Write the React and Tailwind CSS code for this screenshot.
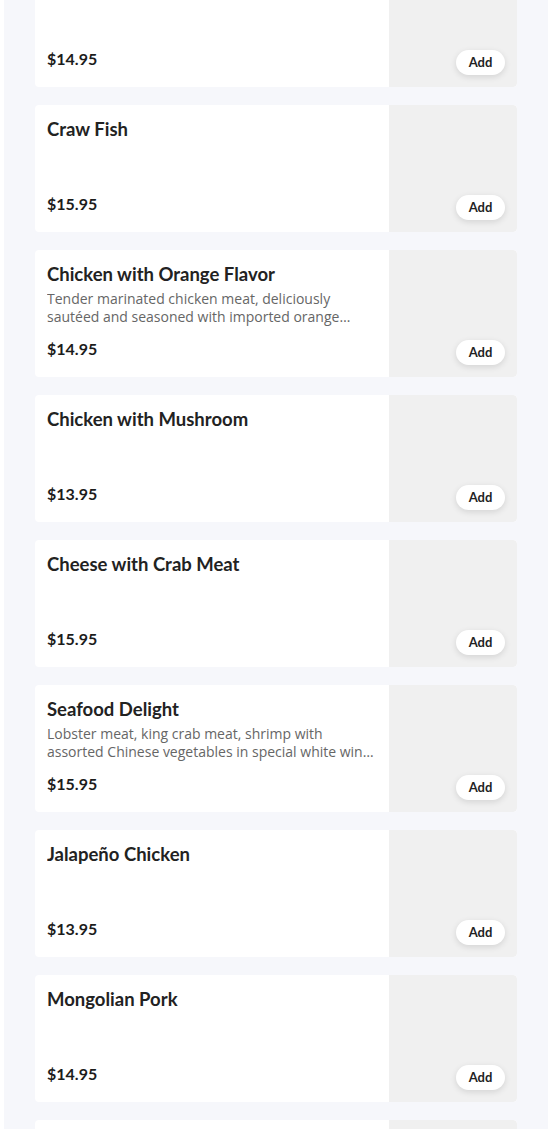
const items = [
  { name: "Sesame Chicken", price: "$14.95" },
  { name: "Craw Fish", price: "$15.95" },
  {
    name: "Chicken with Orange Flavor",
    description:
      "Tender marinated chicken meat, deliciously sautéed and seasoned with imported orange peels in a tangy sauce.",
    price: "$14.95",
  },
  { name: "Chicken with Mushroom", price: "$13.95" },
  { name: "Cheese with Crab Meat", price: "$15.95" },
  {
    name: "Seafood Delight",
    description:
      "Lobster meat, king crab meat, shrimp with assorted Chinese vegetables in special white wine sauce.",
    price: "$15.95",
  },
  { name: "Jalapeño Chicken", price: "$13.95" },
  { name: "Mongolian Pork", price: "$14.95" },
  { name: "Hunan Beef", price: "$14.95" },
];

function MenuCard({ item }) {
  return (
    <div className="flex h-[127px] shrink-0 overflow-hidden rounded-[4px] bg-white">
      <div className="flex min-w-0 flex-1 flex-col px-3 pt-3 pb-[17px]">
        <h3 className="truncate text-[18.5px] font-bold leading-6 text-[#222]">
          {item.name}
        </h3>
        {item.description && (
          <p className="mt-[4px] line-clamp-2 font-['Open_Sans',sans-serif] text-[14px] leading-[18px] text-[#666]">
            {item.description}
          </p>
        )}
        <div className="mt-auto text-[16px] font-bold leading-[22px] text-[#1c1c1c]">
          {item.price}
        </div>
      </div>
      <div className="relative w-[128px] shrink-0 rounded-r-[4px] bg-[#f0f0f0]">
        <button
          type="button"
          className="absolute right-3 bottom-[12px] h-[25px] w-[49px] rounded-full bg-white text-[13px] font-bold text-[#222] shadow-[0_2px_6px_rgba(0,0,0,0.12)]"
        >
          Add
        </button>
      </div>
    </div>
  );
}

export default function App() {
  return (
    <div
      className="h-[1129px] overflow-hidden bg-white"
      style={{ fontFamily: "Lato, 'Noto Sans', sans-serif" }}
    >
      <div className="ml-1 mr-0.5 h-full overflow-hidden bg-[#f6f7fb] px-[31px]">
        <div className="-mt-[40px] flex flex-col gap-[18px]">
          {items.map((item) => (
            <MenuCard key={item.name} item={item} />
          ))}
        </div>
      </div>
    </div>
  );
}
